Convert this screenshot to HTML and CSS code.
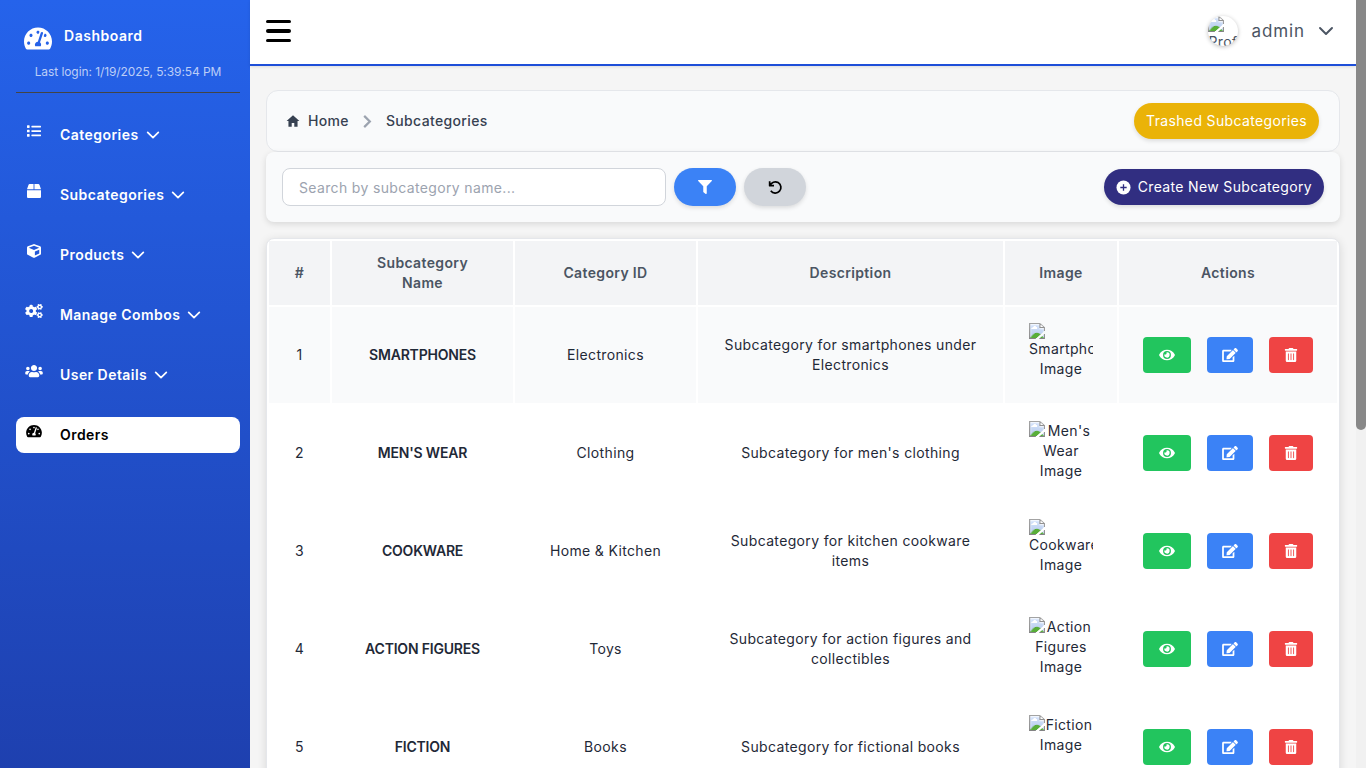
FILE: index.html
```html
<!DOCTYPE html>
<html lang="en">
<head>
  <meta charset="UTF-8" />
  <meta name="viewport" content="width=device-width, initial-scale=1.0" />
  <title>Subcategories</title>
  <link rel="stylesheet" href="styles.css">
</head>
<body>
  <svg class="icon-defs" aria-hidden="true">
    <symbol id="i-gauge" viewBox="0 0 576 512"><path d="M288 32C128.94 32 0 160.94 0 320c0 52.8 14.25 102.26 39.06 144.8 5.61 9.62 16.3 15.2 27.44 15.2h443c11.14 0 21.83-5.58 27.44-15.2C561.75 422.26 576 372.8 576 320c0-159.06-128.94-288-288-288zm0 64c14.71 0 26.58 10.13 30.32 23.65-1.11 2.26-2.64 4.23-3.45 6.67l-9.22 27.67c-5.13 3.49-10.97 6.01-17.64 6.01-17.67 0-32-14.33-32-32S270.33 96 288 96zM96 384c-17.67 0-32-14.33-32-32s14.33-32 32-32 32 14.33 32 32-14.33 32-32 32zm48-160c-17.67 0-32-14.33-32-32s14.33-32 32-32 32 14.33 32 32-14.33 32-32 32zm246.77-72.41l-61.33 184C343.13 347.33 352 364.54 352 384c0 11.72-3.38 22.55-8.88 32H232.88c-5.5-9.45-8.88-20.28-8.88-32 0-33.94 26.5-61.43 59.9-63.59l61.34-184.01c4.17-12.56 17.73-19.45 30.36-15.17 12.57 4.19 19.35 17.79 15.17 30.36zm14.66 57.2l15.52-46.55c3.47-1.29 7.13-2.23 11.05-2.23 17.67 0 32 14.33 32 32s-14.33 32-32 32c-11.38-.01-20.89-6.28-26.57-15.22zM480 384c-17.67 0-32-14.33-32-32s14.33-32 32-32 32 14.33 32 32-14.33 32-32 32z"/></symbol>
    <symbol id="i-list" viewBox="0 0 512 512"><path d="M80 368H16a16 16 0 0 0-16 16v64a16 16 0 0 0 16 16h64a16 16 0 0 0 16-16v-64a16 16 0 0 0-16-16zm0-320H16A16 16 0 0 0 0 64v64a16 16 0 0 0 16 16h64a16 16 0 0 0 16-16V64a16 16 0 0 0-16-16zm0 160H16a16 16 0 0 0-16 16v64a16 16 0 0 0 16 16h64a16 16 0 0 0 16-16v-64a16 16 0 0 0-16-16zm416 176H176a16 16 0 0 0-16 16v32a16 16 0 0 0 16 16h320a16 16 0 0 0 16-16v-32a16 16 0 0 0-16-16zm0-320H176a16 16 0 0 0-16 16v32a16 16 0 0 0 16 16h320a16 16 0 0 0 16-16V80a16 16 0 0 0-16-16zm0 160H176a16 16 0 0 0-16 16v32a16 16 0 0 0 16 16h320a16 16 0 0 0 16-16v-32a16 16 0 0 0-16-16z"/></symbol>
    <symbol id="i-box" viewBox="0 0 512 512"><path d="M509.5 184.6L458.9 32.8C452.4 13.2 434.1 0 413.4 0H272v192h238.7c-.4-2.5-.4-5-1.2-7.4zM240 0H98.6c-20.7 0-39 13.2-45.5 32.8L2.5 184.6c-.8 2.4-.8 4.9-1.2 7.4H240V0zM0 224v240c0 26.5 21.5 48 48 48h416c26.5 0 48-21.5 48-48V224H0z"/></symbol>
    <symbol id="i-cube" viewBox="0 0 512 512"><path d="M239.1 6.3l-208 78c-18.7 7-31.1 25-31.1 45v225.1c0 18.2 10.3 34.8 26.5 42.9l208 104c13.5 6.8 29.4 6.8 42.9 0l208-104c16.3-8.1 26.5-24.8 26.5-42.9V129.3c0-20-12.4-37.9-31.1-44.9l-208-78C262 2.2 250 2.2 239.1 6.3zM256 68.4l192 72v1.1l-192 78-192-78v-1.1l192-72zm32 356V275.5l160-65v133.9l-160 80z"/></symbol>
    <symbol id="i-cogs" viewBox="0 0 640 512"><path d="M512.1 191l-8.2 14.3c-3 5.3-9.4 7.5-15.1 5.4-11.8-4.4-22.6-10.7-32.1-18.6-4.6-3.8-5.8-10.5-2.8-15.7l8.2-14.3c-6.9-8-12.3-17.3-15.9-27.4h-16.5c-6 0-11.2-4.3-12.2-10.3-2-12-2.1-24.6 0-37.1 1-6 6.2-10.4 12.2-10.4h16.5c3.6-10.1 9-19.4 15.9-27.4l-8.2-14.3c-3-5.2-1.9-11.9 2.8-15.7 9.5-7.9 20.4-14.2 32.1-18.6 5.7-2.1 12.1.1 15.1 5.4l8.2 14.3c10.5-1.9 21.2-1.9 31.7 0L552 6.3c3-5.3 9.4-7.5 15.1-5.4 11.8 4.4 22.6 10.7 32.1 18.6 4.6 3.8 5.8 10.5 2.8 15.7l-8.2 14.3c6.9 8 12.3 17.3 15.9 27.4h16.5c6 0 11.2 4.3 12.2 10.3 2 12 2.1 24.6 0 37.1-1 6-6.2 10.4-12.2 10.4h-16.5c-3.6 10.1-9 19.4-15.9 27.4l8.2 14.3c3 5.2 1.9 11.9-2.8 15.7-9.5 7.9-20.4 14.2-32.1 18.6-5.7 2.1-12.1-.1-15.1-5.4l-8.2-14.3c-10.4 1.9-21.2 1.9-31.7 0zm-10.5-58.8c38.5 29.6 82.4-14.3 52.8-52.8-38.5-29.7-82.4 14.3-52.8 52.8zM386.3 286.1l33.7 16.8c10.1 5.8 14.5 18.1 10.5 29.1-8.9 24.2-26.4 46.4-42.6 65.8-7.4 8.9-20.2 11.1-30.3 5.3l-29.1-16.8c-16 13.7-34.6 24.6-54.9 31.7v33.6c0 11.6-8.3 21.6-19.7 23.6-24.6 4.2-50.4 4.4-75.9 0-11.5-2-20-11.9-20-23.6V418c-20.3-7.2-38.9-18-54.9-31.7L74 403c-10 5.8-22.9 3.6-30.3-5.3-16.2-19.4-33.3-41.6-42.2-65.7-4-10.9.4-23.2 10.5-29.1l33.3-16.8c-3.9-20.9-3.9-42.4 0-63.4L12 205.8c-10.1-5.8-14.6-18.1-10.5-29 8.9-24.2 26-46.4 42.2-65.8 7.4-8.9 20.2-11.1 30.3-5.3l29.1 16.8c16-13.7 34.6-24.6 54.9-31.7V57.1c0-11.5 8.2-21.5 19.6-23.5 24.6-4.2 50.5-4.4 76-.1 11.5 2 20 11.9 20 23.6v33.6c20.3 7.2 38.9 18 54.9 31.7l29.1-16.8c10-5.8 22.9-3.6 30.3 5.3 16.2 19.4 33.2 41.6 42.1 65.8 4 10.9.1 23.2-10 29.1l-33.7 16.8c3.9 21 3.9 42.5 0 63.5zm-117.6 21.1c59.2-77-28.7-164.9-105.7-105.7-59.2 77 28.7 164.9 105.7 105.7zm243.4 182.7l-8.2 14.3c-3 5.3-9.4 7.5-15.1 5.4-11.8-4.4-22.6-10.7-32.1-18.6-4.6-3.8-5.8-10.5-2.8-15.7l8.2-14.3c-6.9-8-12.3-17.3-15.9-27.4h-16.5c-6 0-11.2-4.3-12.2-10.3-2-12-2.1-24.6 0-37.1 1-6 6.2-10.4 12.2-10.4h16.5c3.6-10.1 9-19.4 15.9-27.4l-8.2-14.3c-3-5.2-1.9-11.9 2.8-15.7 9.5-7.9 20.4-14.2 32.1-18.6 5.7-2.1 12.1.1 15.1 5.4l8.2 14.3c10.5-1.9 21.2-1.9 31.7 0l8.2-14.3c3-5.3 9.4-7.5 15.1-5.4 11.8 4.4 22.6 10.7 32.1 18.6 4.6 3.8 5.8 10.5 2.8 15.7l-8.2 14.3c6.9 8 12.3 17.3 15.9 27.4h16.5c6 0 11.2 4.3 12.2 10.3 2 12 2.1 24.6 0 37.1-1 6-6.2 10.4-12.2 10.4h-16.5c-3.6 10.1-9 19.4-15.9 27.4l8.2 14.3c3 5.2 1.9 11.9-2.8 15.7-9.5 7.9-20.4 14.2-32.1 18.6-5.7 2.1-12.1-.1-15.1-5.4l-8.2-14.3c-10.4 1.9-21.2 1.9-31.7 0zM501.6 431c38.5 29.6 82.4-14.3 52.8-52.8-38.5-29.6-82.4 14.3-52.8 52.8z"/></symbol>
    <symbol id="i-users" viewBox="0 0 640 512"><path d="M96 224c35.3 0 64-28.7 64-64s-28.7-64-64-64-64 28.7-64 64 28.7 64 64 64zm448 0c35.3 0 64-28.7 64-64s-28.7-64-64-64-64 28.7-64 64 28.7 64 64 64zm32 32h-64c-17.6 0-33.5 7.1-45.1 18.6 40.3 22.1 68.9 62 75.1 109.4h66c17.7 0 32-14.3 32-32v-32c0-35.3-28.7-64-64-64zm-256 0c61.9 0 112-50.1 112-112S381.9 32 320 32 208 82.1 208 144s50.1 112 112 112zm76.8 32h-8.3c-20.8 10-43.9 16-68.5 16s-47.6-6-68.5-16h-8.3C179.6 288 128 339.6 128 403.2V432c0 26.5 21.5 48 48 48h288c26.5 0 48-21.5 48-48v-28.8c0-63.6-51.6-115.2-115.2-115.2zm-223.7-13.4C161.5 263.1 145.6 256 128 256H64c-35.3 0-64 28.7-64 64v32c0 17.7 14.3 32 32 32h65.9c6.3-47.4 34.9-87.3 75.2-109.4z"/></symbol>
    <symbol id="i-eye" viewBox="0 0 576 512"><path d="M572.52 241.4C518.29 135.59 410.93 64 288 64S57.68 135.64 3.48 241.41a32.35 32.35 0 0 0 0 29.19C57.71 376.41 165.07 448 288 448s230.32-71.64 284.52-177.41a32.35 32.35 0 0 0 0-29.19zM288 400a144 144 0 1 1 144-144 143.93 143.93 0 0 1-144 144zm0-240a95.31 95.31 0 0 0-25.31 3.79 47.85 47.85 0 0 1-66.9 66.9A95.78 95.78 0 1 0 288 160z"/></symbol>
    <symbol id="i-edit" viewBox="0 0 576 512"><path d="M402.6 83.2l90.2 90.2c3.8 3.8 3.8 10 0 13.8L274.4 405.6l-92.8 10.3c-12.4 1.4-22.9-9.1-21.5-21.5l10.3-92.8L388.8 83.2c3.8-3.8 10-3.8 13.8 0zm162-22.9l-48.8-48.8c-15.2-15.2-39.9-15.2-55.2 0l-35.4 35.4c-3.8 3.8-3.8 10 0 13.8l90.2 90.2c3.8 3.8 10 3.8 13.8 0l35.4-35.4c15.2-15.3 15.2-40 0-55.2zM384 346.2V448H64V128h229.8c3.2 0 6.2-1.3 8.5-3.5l40-40c7.6-7.6 2.2-20.5-8.5-20.5H48C21.5 64 0 85.5 0 112v352c0 26.5 21.5 48 48 48h352c26.5 0 48-21.5 48-48V306.2c0-10.7-12.9-16-20.5-8.5l-40 40c-2.2 2.3-3.5 5.3-3.5 8.5z"/></symbol>
    <symbol id="i-trash" viewBox="0 0 448 512"><path d="M32 464a48 48 0 0 0 48 48h288a48 48 0 0 0 48-48V128H32zm272-256a16 16 0 0 1 32 0v224a16 16 0 0 1-32 0zm-96 0a16 16 0 0 1 32 0v224a16 16 0 0 1-32 0zm-96 0a16 16 0 0 1 32 0v224a16 16 0 0 1-32 0zM432 32H312l-9.4-18.7A24 24 0 0 0 281.1 0H166.8a23.72 23.72 0 0 0-21.4 13.3L136 32H16A16 16 0 0 0 0 48v32a16 16 0 0 0 16 16h416a16 16 0 0 0 16-16V48a16 16 0 0 0-16-16z"/></symbol>
    <symbol id="i-filter" viewBox="0 0 512 512"><path d="M487.976 0H24.028C2.71 0-8.047 25.866 7.058 40.971L192 225.941V432c0 7.831 3.821 15.17 10.237 19.662l80 55.98C298.02 518.69 320 507.493 320 487.98V225.941l184.947-184.97C520.021 25.896 509.338 0 487.976 0z"/></symbol>
    <symbol id="i-home" viewBox="0 0 24 24"><path d="M12 2.2L1 12.2h3.2V22h5.6v-6.6h4.4V22h5.6v-9.8H23z"/></symbol>
    <symbol id="i-chevron" viewBox="0 0 24 24"><path d="M4 8l8 8 8-8" fill="none" stroke="currentColor" stroke-width="2.6" stroke-linecap="round" stroke-linejoin="round"/></symbol>
  </svg>

  <div class="layout">
    <aside class="sidebar">
      <div class="brand">
        <svg class="brand-icon"><use href="#i-gauge"/></svg>
        <span class="brand-name">Dashboard</span>
      </div>
      <p class="last-login">Last login: 1/19/2025, 5:39:54 PM</p>
      <nav class="nav">
        <a class="nav-item"><svg class="nav-icon"><use href="#i-list"/></svg><span>Categories</span><svg class="nav-caret"><use href="#i-chevron"/></svg></a>
        <a class="nav-item"><svg class="nav-icon"><use href="#i-box"/></svg><span>Subcategories</span><svg class="nav-caret"><use href="#i-chevron"/></svg></a>
        <a class="nav-item"><svg class="nav-icon"><use href="#i-cube"/></svg><span>Products</span><svg class="nav-caret"><use href="#i-chevron"/></svg></a>
        <a class="nav-item"><svg class="nav-icon nav-icon-wide"><use href="#i-cogs"/></svg><span>Manage Combos</span><svg class="nav-caret"><use href="#i-chevron"/></svg></a>
        <a class="nav-item"><svg class="nav-icon nav-icon-wide"><use href="#i-users"/></svg><span>User Details</span><svg class="nav-caret"><use href="#i-chevron"/></svg></a>
        <a class="nav-item active"><svg class="nav-icon nav-icon-wide"><use href="#i-gauge"/></svg><span>Orders</span></a>
      </nav>
    </aside>

    <div class="content">
      <header class="topbar">
        <div class="hamburger"><span></span><span></span><span></span></div>
        <div class="user">
          <img class="avatar" src="profile.jpg" alt="Profile" />
          <span class="user-name">admin</span>
          <svg class="user-caret"><use href="#i-chevron"/></svg>
        </div>
      </header>

      <main class="main">
        <div class="crumbs-card">
          <div class="crumbs">
            <svg class="crumb-home"><use href="#i-home"/></svg>
            <span>Home</span>
            <svg class="crumb-sep" viewBox="0 0 10 16"><path d="M2 2l6 6-6 6" fill="none" stroke="currentColor" stroke-width="2.4"/></svg>
            <span>Subcategories</span>
          </div>
          <button class="pill pill-yellow">Trashed Subcategories</button>
        </div>

        <div class="search-card">
          <input class="search" type="text" placeholder="Search by subcategory name..." />
          <button class="pill-icon pill-blue"><svg class="icon-14"><use href="#i-filter"/></svg></button>
          <button class="pill-icon pill-grey">
            <svg class="icon-undo" viewBox="0 0 24 24"><path d="M4 3.5v6.5h6.5M4.5 10a8.4 8.4 0 1 1 1.2 7.6" fill="none" stroke="currentColor" stroke-width="2.6" stroke-linejoin="round"/></svg>
          </button>
          <button class="pill pill-indigo">
            <svg class="plus-icon" viewBox="0 0 16 16"><circle cx="8" cy="8" r="7.5" fill="#fff"/><path d="M8 4.6v6.8M4.6 8h6.8" stroke="#312e81" stroke-width="1.4"/></svg>
            Create New Subcategory
          </button>
        </div>

        <div class="table-card">
          <table class="table">
            <colgroup>
              <col class="col-num"><col class="col-name"><col class="col-cat"><col class="col-desc"><col class="col-img"><col class="col-act">
            </colgroup>
            <thead>
              <tr><th>#</th><th>Subcategory Name</th><th>Category ID</th><th>Description</th><th>Image</th><th>Actions</th></tr>
            </thead>
            <tbody>
              <tr class="odd">
                <td>1</td><td class="name">SMARTPHONES</td><td>Electronics</td>
                <td>Subcategory for smartphones under Electronics</td>
                <td><img class="thumb" src="smartphones.jpg" alt="Smartphones Image" /></td>
                <td><div class="actions"><button class="act act-view"><svg><use href="#i-eye"/></svg></button><button class="act act-edit"><svg><use href="#i-edit"/></svg></button><button class="act act-del"><svg><use href="#i-trash"/></svg></button></div></td>
              </tr>
              <tr>
                <td>2</td><td class="name">MEN'S WEAR</td><td>Clothing</td>
                <td>Subcategory for men's clothing</td>
                <td><img class="thumb" src="mens-wear.jpg" alt="Men's Wear Image" /></td>
                <td><div class="actions"><button class="act act-view"><svg><use href="#i-eye"/></svg></button><button class="act act-edit"><svg><use href="#i-edit"/></svg></button><button class="act act-del"><svg><use href="#i-trash"/></svg></button></div></td>
              </tr>
              <tr>
                <td>3</td><td class="name">COOKWARE</td><td>Home &amp; Kitchen</td>
                <td>Subcategory for kitchen cookware items</td>
                <td><img class="thumb" src="cookware.jpg" alt="Cookware Image" /></td>
                <td><div class="actions"><button class="act act-view"><svg><use href="#i-eye"/></svg></button><button class="act act-edit"><svg><use href="#i-edit"/></svg></button><button class="act act-del"><svg><use href="#i-trash"/></svg></button></div></td>
              </tr>
              <tr>
                <td>4</td><td class="name">ACTION FIGURES</td><td>Toys</td>
                <td>Subcategory for action figures and collectibles</td>
                <td><img class="thumb" src="action-figures.jpg" alt="Action Figures Image" /></td>
                <td><div class="actions"><button class="act act-view"><svg><use href="#i-eye"/></svg></button><button class="act act-edit"><svg><use href="#i-edit"/></svg></button><button class="act act-del"><svg><use href="#i-trash"/></svg></button></div></td>
              </tr>
              <tr>
                <td>5</td><td class="name">FICTION</td><td>Books</td>
                <td>Subcategory for fictional books</td>
                <td><img class="thumb" src="fiction.jpg" alt="Fiction Image" /></td>
                <td><div class="actions"><button class="act act-view"><svg><use href="#i-eye"/></svg></button><button class="act act-edit"><svg><use href="#i-edit"/></svg></button><button class="act act-del"><svg><use href="#i-trash"/></svg></button></div></td>
              </tr>
            </tbody>
          </table>
        </div>
      </main>
    </div>

    <div class="scrollbar"><div class="scrollbar-thumb"></div></div>
  </div>
</body>
</html>
```

FILE: styles.css
```css
:root {
  --blue: #3b82f6;
  --blue-dark: #1d4ed8;
  --text-dark: #1f2937;
  --text-mid: #4b5563;
  --line: #e5e7eb;
  --card: #f9fafb;
}
* {
  box-sizing: border-box;
}
body {
  margin: 0;
  font-family: Inter, "Noto Sans", sans-serif;
  font-size: 14px;
  line-height: 20px;
  letter-spacing: 0.35px;
  color: var(--text-dark);
  background: #f5f5f5;
}
button {
  font: inherit;
  letter-spacing: inherit;
  border: none;
  cursor: pointer;
}
.icon-defs {
  display: none;
}
.layout {
  display: flex;
  height: 100vh;
  overflow: hidden;
}

/* sidebar */
.sidebar {
  flex: 0 0 250px;
  padding: 0 10px 0 16px;
  color: #fff;
  background: linear-gradient(to bottom, #2563eb, #1e40af);
}
.brand {
  display: flex;
  align-items: flex-start;
  gap: 12px;
  padding: 26px 0 0 8px;
  height: 52px;
}
.brand-icon {
  width: 28px;
  height: 25px;
  fill: #fff;
}
.brand-name {
  font-weight: 600;
  letter-spacing: 0.53px;
}
.last-login {
  margin: 10px 0 0;
  padding-bottom: 9px;
  height: 31px;
  font-size: 12px;
  line-height: 20px;
  letter-spacing: -0.08px;
  text-align: center;
  color: rgba(255, 255, 255, 0.7);
  border-bottom: 1px solid #444;
}
.nav {
  display: flex;
  flex-direction: column;
  gap: 24px;
  margin-top: 24px;
}
.nav-item {
  display: flex;
  align-items: center;
  height: 36px;
  padding-left: 11px;
  border-radius: 8px;
  font-weight: 600;
  letter-spacing: 0.45px;
  color: #fff;
}
.nav-icon {
  flex: none;
  width: 14px;
  height: 14px;
  margin: -8px 19px 0 0;
  fill: #fff;
}
.nav-icon-wide {
  width: 18px;
  margin-left: -2px;
  margin-right: 17px;
}
.nav-caret {
  width: 16px;
  height: 16px;
  margin-left: 6px;
  fill: none;
  color: #fff;
}
.nav-item.active {
  color: #000;
  background: #fff;
}
.nav-item.active .nav-icon {
  fill: #000;
}

/* right side */
.content {
  flex: 1;
  min-width: 0;
}
.scrollbar {
  flex: 0 0 10px;
  background: #f1f1f1;
}
.scrollbar-thumb {
  height: 430px;
  border-radius: 0 0 5px 5px;
  background: #888;
}
.topbar {
  display: flex;
  align-items: center;
  justify-content: space-between;
  height: 66px;
  padding: 0 21px 2px 16px;
  background: #fff;
  border-bottom: 2px solid var(--blue-dark);
  box-shadow: 0 1px 3px rgba(0, 0, 0, 0.1);
}
.hamburger {
  display: flex;
  flex-direction: column;
  gap: 6px;
  width: 25px;
}
.hamburger span {
  height: 3.5px;
  border-radius: 2px;
  background: #000;
}
.user {
  display: flex;
  align-items: center;
  color: var(--text-mid);
}
.avatar {
  width: 30px;
  height: 30px;
  border-radius: 50%;
  overflow: hidden;
  font-size: 14px;
  box-shadow: 0 1px 4px rgba(0, 0, 0, 0.25);
}
.user-name {
  margin-left: 13px;
  font-size: 17px;
  letter-spacing: 0.9px;
}
.user-caret {
  width: 18px;
  height: 18px;
  margin-left: 12px;
}

/* main */
.main {
  padding: 24px 16px;
}
.crumbs-card {
  display: flex;
  align-items: center;
  justify-content: space-between;
  height: 62px;
  padding: 0 20px;
  background: var(--card);
  border: 1px solid var(--line);
  border-radius: 12px;
}
.crumbs {
  display: flex;
  align-items: center;
  font-weight: 500;
  color: #374151;
}
.crumb-home {
  width: 14px;
  height: 14px;
  margin: 0 8px 0 -1px;
  fill: #374151;
}
.crumb-sep {
  width: 10px;
  height: 15px;
  margin: 0 14px 0 13px;
  color: #9ca3af;
}
.pill {
  display: inline-flex;
  align-items: center;
  height: 36px;
  padding: 0 12px;
  border-radius: 18px;
  color: #fff;
  box-shadow: 0 2px 4px rgba(0, 0, 0, 0.12);
}
.pill-yellow {
  background: #eab308;
}
.pill-indigo {
  margin-left: auto;
  background: #312e81;
}
.plus-icon {
  width: 15px;
  height: 15px;
  margin-right: 7px;
}
.search-card {
  display: flex;
  align-items: center;
  gap: 8px;
  height: 70px;
  margin-bottom: 16px;
  padding: 0 16px;
  background: var(--card);
  border-radius: 8px;
  box-shadow: 0 2px 6px rgba(0, 0, 0, 0.12);
}
.search {
  width: 384px;
  height: 38px;
  padding: 0 16px;
  font: inherit;
  letter-spacing: inherit;
  border: 1px solid #d1d5db;
  border-radius: 8px;
  background: #fff;
}
.search::placeholder {
  color: #9ca3af;
}
.pill-icon {
  display: flex;
  align-items: center;
  justify-content: center;
  width: 62px;
  height: 38px;
  border-radius: 19px;
  box-shadow: 0 2px 4px rgba(0, 0, 0, 0.12);
}
.icon-14 {
  width: 14px;
  height: 14px;
}
.icon-undo {
  width: 16px;
  height: 16px;
}
.pill-blue {
  color: #fff;
  fill: #fff;
  background: var(--blue);
}
.pill-grey {
  color: #000;
  background: #d1d5db;
}

/* table */
.table-card {
  background: #fff;
  border: 1px solid var(--line);
  border-radius: 8px;
  box-shadow: 0 2px 10px rgba(0, 0, 0, 0.12);
  overflow: hidden;
}
.table {
  width: 100%;
  table-layout: fixed;
  border-collapse: separate;
  border-spacing: 2px;
}
.col-num { width: 61px; }
.col-name { width: 181px; }
.col-cat { width: 181px; }
.col-desc { width: 305px; }
.col-img { width: 112px; }
.col-act { width: 218px; }
.table th {
  height: 64px;
  padding: 12px 24px;
  font-weight: 600;
  color: var(--text-mid);
  background: #f3f4f6;
}
.table td {
  height: 96px;
  padding: 16px;
  text-align: center;
  vertical-align: middle;
}
.table .odd td {
  background: var(--card);
}
.table td.name {
  font-weight: 600;
  letter-spacing: -0.2px;
}
.thumb {
  display: inline-block;
  width: 64px;
  height: 64px;
  overflow: hidden;
  vertical-align: top;
}
.actions {
  display: flex;
  justify-content: center;
  gap: 16px;
}
.act {
  display: flex;
  align-items: center;
  justify-content: center;
  height: 36px;
  border-radius: 4px;
  fill: #fff;
}
.act svg {
  width: 16px;
  height: 14px;
}
.act-view {
  width: 48px;
  background: #22c55e;
}
.act-edit {
  width: 46px;
  background: var(--blue);
}
.act-del {
  width: 44px;
  background: #ef4444;
}
```
